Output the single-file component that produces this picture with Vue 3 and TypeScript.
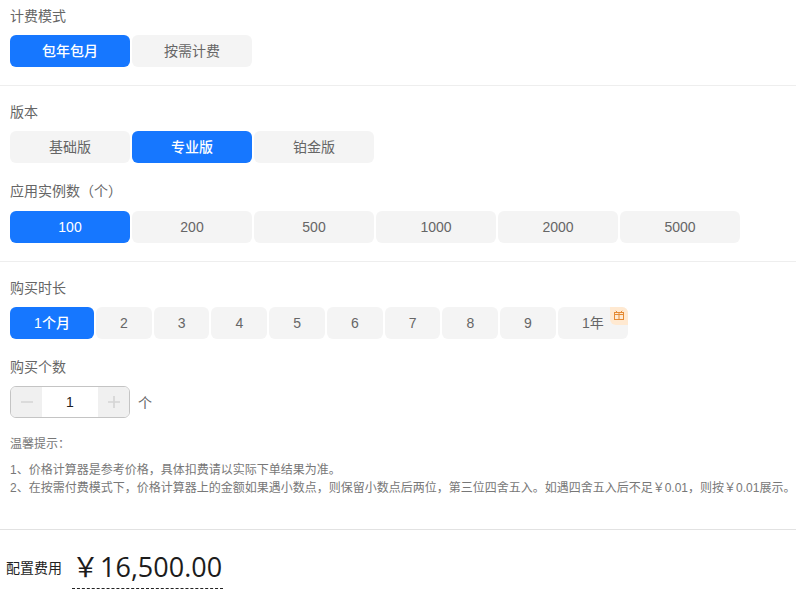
<script setup lang="ts">
const modes = ['包年包月', '按需计费']
const editions = ['基础版', '专业版', '铂金版']
const counts = ['100', '200', '500', '1000', '2000', '5000']
const months = ['2', '3', '4', '5', '6', '7', '8', '9']
</script>

<template>
  <div class="page">
    <section class="block first">
      <div class="label">计费模式</div>
      <div class="options">
        <button v-for="(m, i) in modes" :key="m" class="opt wide" :class="{ on: i === 0 }">{{ m }}</button>
      </div>
    </section>
    <hr class="rule" />
    <section class="block edition">
      <div class="label">版本</div>
      <div class="options">
        <button v-for="(m, i) in editions" :key="m" class="opt wide" :class="{ on: i === 1 }">{{ m }}</button>
      </div>
    </section>
    <section class="block count">
      <div class="label">应用实例数（个）</div>
      <div class="options">
        <button v-for="(m, i) in counts" :key="m" class="opt wide" :class="{ on: i === 0 }">{{ m }}</button>
      </div>
    </section>
    <hr class="rule" />
    <section class="block duration">
      <div class="label">购买时长</div>
      <div class="options">
        <button class="opt month on">1个月</button>
        <button v-for="m in months" :key="m" class="opt num">{{ m }}</button>
        <button class="opt year">
          <span class="year-text">1年</span>
          <span class="gift">
            <svg width="10" height="10" viewBox="0 0 10 10" fill="none" stroke="#e58a33" stroke-width="1">
              <rect x="0.5" y="2.5" width="9" height="7" />
              <path d="M0.5 4.5H9.5M5 2.5V9.5" />
              <path d="M3.5 2.5L1.8 0.8M6.5 2.5L8.2 0.8" />
            </svg>
          </span>
        </button>
      </div>
    </section>
    <section class="block quantity">
      <div class="label">购买个数</div>
      <div class="qty-row">
        <div class="stepper">
          <span class="step">
            <svg width="14" height="14" viewBox="0 0 14 14"><path d="M1 7H13" stroke="#d4d4d4" stroke-width="1.6" /></svg>
          </span>
          <span class="value">1</span>
          <span class="step">
            <svg width="14" height="14" viewBox="0 0 14 14"><path d="M1 7H13M7 1V13" stroke="#d4d4d4" stroke-width="1.6" /></svg>
          </span>
        </div>
        <span class="unit">个</span>
      </div>
    </section>
    <section class="tips">
      <div class="tips-title">温馨提示：</div>
      <p>1、价格计算器是参考价格，具体扣费请以实际下单结果为准。</p>
      <p>2、在按需付费模式下，价格计算器上的金额如果遇小数点，则保留小数点后两位，第三位四舍五入。如遇四舍五入后不足￥0.01，则按￥0.01展示。</p>
    </section>
    <footer class="footer">
      <span class="fee-label">配置费用</span>
      <span class="fee-value"><span class="yen">￥</span>16,500.00</span>
    </footer>
  </div>
</template>

<style scoped>
.page {
  width: 796px;
  height: 596px;
  overflow: hidden;
  font-family: "Liberation Sans", "Noto Sans CJK SC", sans-serif;
  color: #666;
  background: #fff;
}
.block {
  padding-left: 10px;
}
.label {
  font-size: 14px;
  line-height: 20px;
  color: #666;
  margin-bottom: 9px;
}
.first {
  padding-top: 6px;
}
.edition {
  padding-top: 16px;
}
.count {
  padding-top: 18px;
}
.count .label {
  margin-bottom: 10px;
}
.duration {
  padding-top: 16px;
}
.quantity {
  padding-top: 18px;
}
.options {
  display: flex;
  gap: 2px;
}
.opt {
  height: 32px;
  padding: 0;
  border: 0;
  border-radius: 6px;
  background: #f4f4f4;
  color: #666;
  font: inherit;
  font-size: 14px;
  line-height: 32px;
  text-align: center;
}
.opt.on {
  background: #1677ff;
  color: #fff;
  font-weight: 500;
}
.wide {
  width: 120px;
}
.month {
  width: 84px;
}
.num {
  width: 55.74px;
}
.year {
  position: relative;
  width: 70px;
}
.gift {
  position: absolute;
  top: 0;
  right: 0;
  box-sizing: border-box;
  width: 18px;
  height: 18px;
  padding: 3px 0 0 4px;
  display: flex;
  align-items: flex-start;
  justify-content: flex-start;
  background: #ffe9d1;
  border-radius: 0 6px 0 6px;
}
.qty-row {
  display: flex;
  align-items: center;
  gap: 8px;
}
.stepper {
  display: flex;
  box-sizing: border-box;
  width: 120px;
  height: 32px;
  border: 1px solid #c4c4c4;
  border-radius: 6px;
  overflow: hidden;
}
.step {
  width: 31px;
  background: #f0f0f0;
  display: flex;
  align-items: center;
  justify-content: center;
}
.value {
  flex: 1;
  text-align: center;
  font-size: 14px;
  line-height: 30px;
  color: #222;
}
.unit {
  font-size: 14px;
  color: #666;
}
.tips {
  padding: 17px 0 0 10px;
  font-size: 12px;
  line-height: 18px;
  color: #777;
  white-space: nowrap;
}
.tips-title {
  margin-bottom: 8px;
}
.tips p {
  margin: 0;
}
.rule {
  border: 0;
  height: 1px;
  background: #eee;
  margin: 18px 0 0;
}
.footer {
  margin-top: 32px;
  border-top: 1px solid #e2e2e2;
  padding-left: 6px;
  display: flex;
  align-items: flex-start;
  gap: 10px;
  color: #222;
}
.fee-label {
  font-size: 14px;
  line-height: 20px;
  margin-top: 28px;
}
.fee-value {
  font-family: "Open Sans", "Noto Sans CJK SC", sans-serif;
  font-size: 27px;
  line-height: 38px;
  margin-top: 18px;
  padding: 0 1px 2px 0;
  border-bottom: 1px dashed #222;
  color: #1c1c1c;
}
.yen {
  letter-spacing: 1px;
}
</style>
